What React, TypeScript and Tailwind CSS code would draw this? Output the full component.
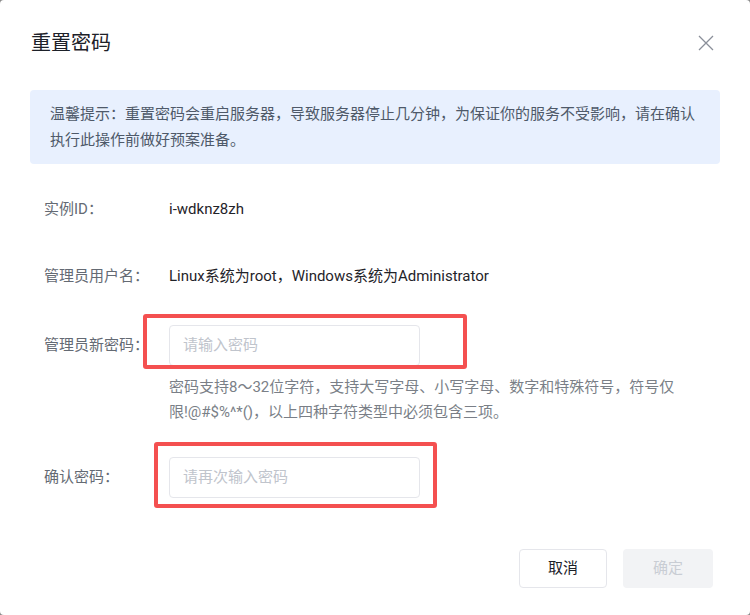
import React from "react";

const font = { fontFamily: 'Roboto, "Noto Sans CJK SC", sans-serif' };

export default function App() {
  return (
    <div className="w-[750px] h-[615px] bg-[#8a8a8a]" style={font}>
      <div className="w-[750px] h-[615px] bg-white rounded-[4px] flex flex-col relative">
        {/* header */}
        <div className="flex items-center justify-between pt-[30px] pl-[31px] pr-[36px]">
          <div className="text-[20px] leading-[26px] text-[#1d2129]">重置密码</div>
          <svg width="16" height="16" viewBox="0 0 16 16">
            <path d="M1 1L15 15M15 1L1 15" stroke="#8a8f99" strokeWidth="1.3" fill="none" />
          </svg>
        </div>

        {/* alert */}
        <div className="mx-[30px] mt-[34px] rounded-[4px] bg-[#e8f0fe] py-[11px] pl-[20px] pr-[16px] text-[15px] leading-[26px] text-[#4e5969]">
          温馨提示：重置密码会重启服务器，导致服务器停止几分钟，为保证你的服务不受影响，请在确认执行此操作前做好预案准备。
        </div>

        {/* rows */}
        <div className="pl-[44px] flex flex-col">
          <div className="mt-[25px] h-[40px] flex items-center text-[15px]">
            <div className="w-[125px] text-[#646a73]">实例ID：</div>
            <div className="text-[#1f2329]">i-wdknz8zh</div>
          </div>
          <div className="mt-[27px] h-[40px] flex items-center text-[15px]">
            <div className="w-[125px] text-[#646a73]">管理员用户名：</div>
            <div className="text-[#1f2329]">Linux系统为root，Windows系统为Administrator</div>
          </div>
          <div className="mt-[29px] h-[41px] flex items-center text-[15px]">
            <div className="w-[125px] text-[#646a73]">管理员新密码：</div>
            <div className="relative">
              <div className="w-[251px] h-[41px] rounded-[4px] border border-[#e5e6eb] flex items-center pl-[13px] text-[#c0c4cc]">
                请输入密码
              </div>
              <div className="absolute left-[-26px] top-[-11px] w-[324px] h-[55px] border-[4px] border-[#f45050] rounded-[3px]" />
            </div>
          </div>
          <div className="mt-[9px] pl-[125px] pr-[60px] text-[15px] leading-[25px] text-[#7a7f87]">
            密码支持8～32位字符，支持大写字母、小写字母、数字和特殊符号，符号仅限!@#$%^*()，以上四种字符类型中必须包含三项。
          </div>
          <div className="mt-[32px] h-[41px] flex items-center text-[15px]">
            <div className="w-[125px] text-[#646a73]">确认密码：</div>
            <div className="relative">
              <div className="w-[251px] h-[41px] rounded-[4px] border border-[#e5e6eb] flex items-center pl-[13px] text-[#c0c4cc]">
                请再次输入密码
              </div>
              <div className="absolute left-[-15px] top-[-15px] w-[283px] h-[66px] border-[4px] border-[#f45050] rounded-[3px]" />
            </div>
          </div>
        </div>

        {/* footer */}
        <div className="mt-[51px] flex justify-end gap-[16px] pr-[37px]">
          <div className="w-[88px] h-[39px] rounded-[4px] border border-[#e5e6eb] flex items-center justify-center text-[15px] text-[#1d2129]">
            取消
          </div>
          <div className="w-[90px] h-[39px] rounded-[4px] bg-[#f2f3f5] flex items-center justify-center text-[15px] text-[#c9cdd4]">
            确定
          </div>
        </div>
      </div>
    </div>
  );
}
